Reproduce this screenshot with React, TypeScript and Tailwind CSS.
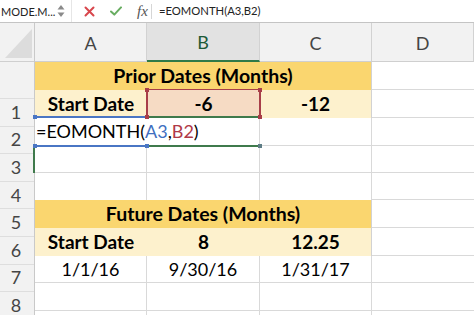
import React from "react";

const GL = "border-[#d9d9d9]";

function HeaderCell({ label, w, active }: { label: string; w: string; active?: boolean }) {
  return (
    <div
      className={`${w} shrink-0 h-full flex items-center justify-center border-r border-[#d2d2d2] ${
        active
          ? "bg-[#e2e2e2] text-[#1d5a36] border-b-2 border-b-[#2f7a48]"
          : "bg-[#f2f2f2] text-[#454545] border-b border-b-[#cfcfcf]"
      } text-[18px] pt-[2px]`}
    >
      {label}
    </div>
  );
}

export default function App() {
  const rowNums = ["1", "2", "3", "4", "5", "6", "7", "8"];
  return (
    <div className="relative w-[474px] h-[315px] overflow-hidden bg-white font-[Lato,sans-serif] text-black">
      {/* Formula bar */}
      <div className="h-[23px] flex items-center bg-white border-b border-[#c4c4c4]">
        <div className="w-[72px] shrink-0 h-full flex items-center justify-between pr-[6px] border-r border-[#e6e6e6]">
          <span className="text-[11px] text-[#222] leading-none ml-[1px]">MODE.M...</span>
          <svg width="8" height="14" viewBox="0 0 8 14">
            <path d="M4 1 L7.5 5.5 L0.5 5.5 Z" fill="#8a8a8a" />
            <path d="M4 13 L7.5 8.5 L0.5 8.5 Z" fill="#8a8a8a" />
          </svg>
        </div>
        <div className="w-[80px] shrink-0 h-full flex items-center pl-[12px] gap-[15px]">
          <svg width="11" height="11" viewBox="0 0 11 11">
            <path d="M1.5 1.5 L9.5 9.5 M9.5 1.5 L1.5 9.5" stroke="#d8464c" strokeWidth="2" strokeLinecap="round" />
          </svg>
          <svg width="12" height="10" viewBox="0 0 12 10">
            <path d="M1 5.5 L4.3 8.6 L11 1.4" stroke="#68ad61" strokeWidth="2" fill="none" strokeLinecap="round" strokeLinejoin="round" />
          </svg>
          <span className="font-['Liberation_Serif',serif] italic text-[15px] text-[#555] leading-none">fx</span>
        </div>
        <div className="h-[15px] border-l border-[#d6d6d6] ml-[-1px]" />
        <span className="ml-[7px] text-[11.25px] text-[#222] leading-none whitespace-nowrap">=EOMONTH(A3,B2)</span>
      </div>

      <div className="flex items-start">
        {/* Row headers */}
        <div className="w-[35px] shrink-0 grid grid-rows-[39px_37px_repeat(8,27.6px)] bg-[#f2f2f2] border-r border-[#c9c9c9] text-[#454545] text-[18px]">
          <div className="border-b border-[#cfcfcf] flex items-end justify-end">
            <svg width="32" height="36" viewBox="0 0 32 36">
              <path d="M3 33 L30 33 L30 4 Z" fill="#dcdcdc" />
            </svg>
          </div>
          <div className="border-b border-[#dedede]" />
          {rowNums.map((n) => (
            <div key={n} className="flex items-center justify-center border-b border-[#dedede] pr-[2px]">
              {n}
            </div>
          ))}
        </div>

        {/* Sheet */}
        <div className="flex flex-col shrink-0">
          <div className="h-[39px] flex">
            <HeaderCell label="A" w="w-[112px]" />
            <HeaderCell label="B" w="w-[113px]" active />
            <HeaderCell label="C" w="w-[112px]" />
            <HeaderCell label="D" w="w-[102px]" />
          </div>

          <div className="grid grid-cols-[112px_113px_112px_102px] grid-rows-[28px_28px_28px_27px_27px_28px_28px_27px_28px_10px] text-[18px]">
            <div className="col-span-3 bg-[#fad66f] border-r border-[#d2d2d2] flex items-center justify-center font-bold text-[19.5px]">
              Prior Dates (Months)
            </div>
            <div className={`border-b ${GL}`} />
            <div className="bg-[#fdf1cd] flex items-center justify-center font-bold text-[19px]">Start Date</div>
            <div className="bg-[#f6dbc4] flex items-center justify-center font-bold text-[19px]">-6</div>
            <div className="bg-[#fdf1cd] border-r border-[#d2d2d2] flex items-center justify-center font-bold text-[19px]">-12</div>
            <div className={`border-b ${GL}`} />
            <div className={`border-b ${GL} flex items-center pl-[1px] whitespace-nowrap overflow-visible relative z-10`}>
              <span>
                =EOMONTH(<span className="text-[#3f6fc0]">A3</span>,<span className="text-[#b03a48]">B2</span>)
              </span>
            </div>
            <div className={`border-b border-r ${GL}`} />
            <div className={`border-b border-r ${GL}`} />
            <div className={`border-b ${GL}`} />
            <div className={`border-b border-r ${GL}`} />
            <div className={`border-b border-r ${GL}`} />
            <div className={`border-b border-r ${GL}`} />
            <div className={`border-b ${GL}`} />
            <div className={`border-r ${GL}`} />
            <div className={`border-r ${GL}`} />
            <div className={`border-r ${GL}`} />
            <div className={`border-b ${GL}`} />
            <div className="col-span-3 bg-[#fad66f] border-r border-[#d2d2d2] flex items-center justify-center font-bold text-[19.5px]">
              Future Dates (Months)
            </div>
            <div className={`border-b ${GL}`} />
            <div className="bg-[#fdf1cd] flex items-center justify-center font-bold text-[19px]">Start Date</div>
            <div className="bg-[#fdf1cd] flex items-center justify-center font-bold text-[19px]">8</div>
            <div className="bg-[#fdf1cd] border-r border-[#d2d2d2] flex items-center justify-center font-bold text-[19px]">12.25</div>
            <div className={`border-b ${GL}`} />
            <div className={`border-b border-r ${GL} flex items-center justify-center`}>1/1/16</div>
            <div className={`border-b border-r ${GL} flex items-center justify-center`}>9/30/16</div>
            <div className={`border-b border-r ${GL} flex items-center justify-center`}>1/31/17</div>
            <div className={`border-b ${GL}`} />
            <div className={`border-b border-r ${GL}`} />
            <div className={`border-b border-r ${GL}`} />
            <div className={`border-b border-r ${GL}`} />
            <div className={`border-b ${GL}`} />
            <div className={`border-r ${GL}`} />
            <div className={`border-r ${GL}`} />
            <div className={`border-r ${GL}`} />
            <div />
          </div>
        </div>
      </div>

      {/* Reference highlight overlays */}
      <div className="absolute left-[146px] top-[89px] w-[115px] h-[29px] border-x-2 border-t border-[#a83e49] z-20" />
      <div className="absolute left-[145px] top-[88px] w-[4px] h-[4px] bg-[#a83e49] z-30" />
      <div className="absolute left-[258px] top-[88px] w-[4px] h-[4px] bg-[#a83e49] z-30" />
      <div className="absolute left-[145px] top-[115px] w-[4px] h-[4px] bg-[#a83e49] z-30" />
      <div className="absolute left-[258px] top-[115px] w-[4px] h-[4px] bg-[#a83e49] z-30" />
      <div className="absolute left-[149px] top-[116px] w-[110px] h-[2px] bg-[#3f7a4c] z-20" />
      <div className="absolute left-[149px] top-[145px] w-[110px] h-[2px] bg-[#3f7a4c] z-20" />
      <div className="absolute left-[258px] top-[144px] w-[4px] h-[4px] bg-[#5e7d86] z-30" />
      <div className="absolute left-[35px] top-[116px] w-[112px] h-[2px] bg-[#4a76c4] z-20" />
      <div className="absolute left-[35px] top-[145px] w-[112px] h-[2px] bg-[#4a76c4] z-20" />
      <div className="absolute left-[33px] top-[115px] w-[4px] h-[4px] bg-[#4a76c4] z-30" />
      <div className="absolute left-[33px] top-[144px] w-[4px] h-[4px] bg-[#4a76c4] z-30" />
      <div className="absolute left-[145px] top-[144px] w-[4px] h-[4px] bg-[#4a76c4] z-30" />
      <div className="absolute left-[33px] top-[147px] w-[2px] h-[26px] bg-[#3f7a4c] z-20" />
    </div>
  );
}
